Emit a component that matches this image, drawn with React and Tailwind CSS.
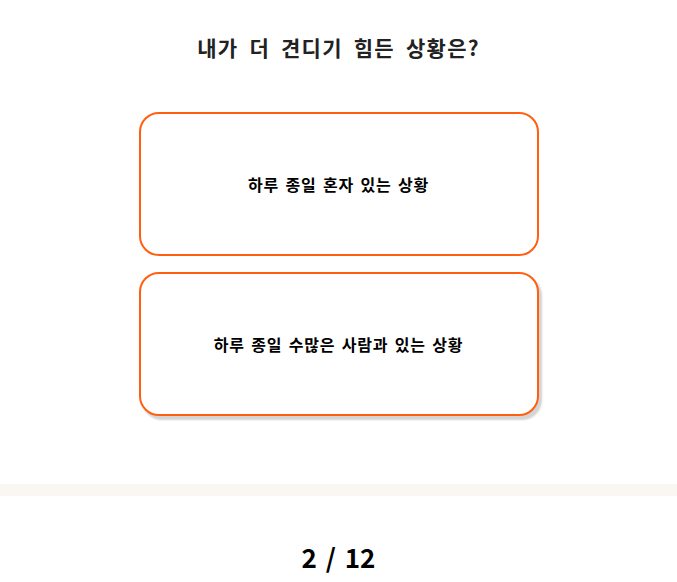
const options = ["하루 종일 혼자 있는 상황", "하루 종일 수많은 사람과 있는 상황"];

const App = () => {
  return (
    <div className="w-full bg-white font-['Noto_Sans_CJK_KR','Noto_Sans',sans-serif]">
      <div className="h-[484px] flex flex-col items-center pt-[32px]">
        <h1 className="text-[21px] leading-[30px] font-bold text-[#222] tracking-[0.06em] [word-spacing:5px]">
          내가 더 견디기 힘든 상황은?
        </h1>
        <div className="mt-[50px] flex flex-col gap-[16px]">
          {options.map((opt, i) => (
            <button
              key={i}
              className={`w-[400px] h-[144px] rounded-[20px] border-2 border-[#ff5f0f] bg-white flex items-center justify-center text-[16px] font-semibold text-black tracking-[0.05em] [word-spacing:2px] ${
                i === 1 ? "shadow-[3px_4px_2px_#d4d4d4]" : ""
              }`}
            >
              {opt}
            </button>
          ))}
        </div>
      </div>
      <div className="h-[12px] bg-[#faf7f2]" />
      <div className="pt-[45px] pb-[20px] text-center">
        <span className="text-[26px] leading-[32px] font-bold text-black [word-spacing:3px]">2 / 12</span>
      </div>
    </div>
  );
};

export default App;
